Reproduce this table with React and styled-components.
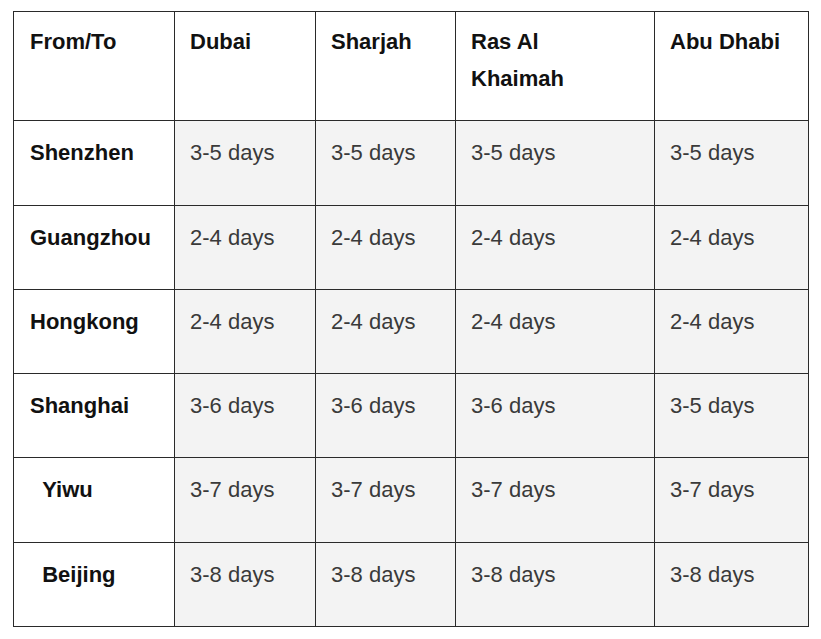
import React from 'react';
import styled, { createGlobalStyle } from 'styled-components';

const GlobalStyle = createGlobalStyle`
  html, body {
    margin: 0;
    padding: 0;
    background: #ffffff;
  }
  body {
    font-family: "Liberation Sans", Arial, sans-serif;
  }
`;

const destinations = ['Dubai', 'Sharjah', 'Ras Al Khaimah', 'Abu Dhabi'];

const rows = [
  { from: 'Shenzhen', times: ['3-5 days', '3-5 days', '3-5 days', '3-5 days'], height: 85 },
  { from: 'Guangzhou', times: ['2-4 days', '2-4 days', '2-4 days', '2-4 days'], height: 84 },
  { from: 'Hongkong', times: ['2-4 days', '2-4 days', '2-4 days', '2-4 days'], height: 84 },
  { from: 'Shanghai', times: ['3-6 days', '3-6 days', '3-6 days', '3-5 days'], height: 84 },
  { from: '\u00a0\u00a0Yiwu', times: ['3-7 days', '3-7 days', '3-7 days', '3-7 days'], height: 85 },
  { from: '\u00a0\u00a0Beijing', times: ['3-8 days', '3-8 days', '3-8 days', '3-8 days'], height: 84 },
];

const colWidths = [161, 141, 140, 199, 154];

function App() {
  return (
    <>
      <GlobalStyle />
      <Page>
        <Table>
          <colgroup>
            {colWidths.map((w, i) => (
              <col key={i} style={{ width: w }} />
            ))}
          </colgroup>
          <thead>
            <HeadRow>
              <HeadCell $first>From/To</HeadCell>
              {destinations.map((d) => (
                <HeadCell key={d}>{d}</HeadCell>
              ))}
            </HeadRow>
          </thead>
          <tbody>
            {rows.map((r) => (
              <BodyRow key={r.from} $height={r.height}>
                <OriginCell>{r.from}</OriginCell>
                {r.times.map((t, i) => (
                  <TimeCell key={i}>{t}</TimeCell>
                ))}
              </BodyRow>
            ))}
          </tbody>
        </Table>
      </Page>
    </>
  );
}

export default App;

const Page = styled.div`
  padding: 11px 13px;
`;

const Table = styled.table`
  border-collapse: collapse;
  table-layout: fixed;
  width: 795px;
  font-size: 22px;
  line-height: 1.7;
`;

const HeadRow = styled.tr`
  height: 109px;
`;

const BodyRow = styled.tr`
  height: ${(p) => p.$height}px;
`;

const Cell = styled.td`
  border: 1px solid #2a2a2a;
  padding: 13px 20px 11px 15px;
  vertical-align: top;
  text-align: left;
`;

const HeadCell = styled(Cell).attrs({ as: 'th' })`
  padding-top: 11px;
  padding-left: ${(p) => (p.$first ? 16 : 15)}px;
  font-weight: bold;
  color: #111111;
  background: #ffffff;
`;

const OriginCell = styled(Cell)`
  padding-left: 16px;
  font-weight: bold;
  color: #111111;
  background: #ffffff;
  white-space: pre;
`;

const TimeCell = styled(Cell)`
  color: #3a3a3a;
  background: #f3f3f3;
`;
